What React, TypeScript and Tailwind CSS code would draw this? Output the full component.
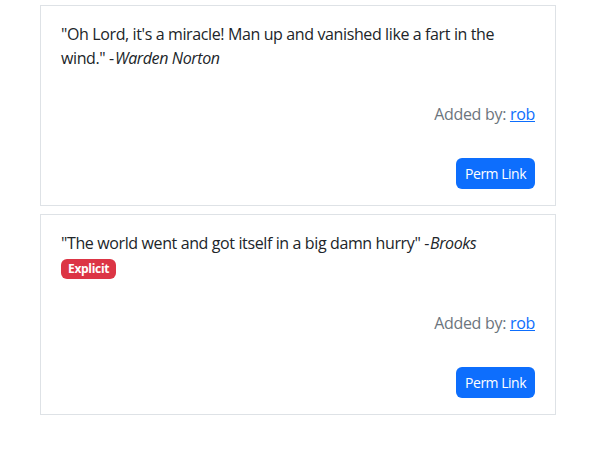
const quotes = [
  {
    text: '"Oh Lord, it\'s a miracle! Man up and vanished like a fart in the wind."',
    author: "Warden Norton",
    explicit: false,
    user: "rob",
  },
  {
    text: '"The world went and got itself in a big damn hurry"',
    author: "Brooks",
    explicit: true,
    user: "rob",
  },
];

const QuoteCard = ({ quote }: { quote: (typeof quotes)[number] }) => {
  return (
    <div className="border border-[#dee2e6] bg-white px-5 pt-4 pb-4 h-[201px] flex flex-col">
      <div className="text-[16px] leading-6 text-[#212529] tracking-[-0.38px]">
        {quote.text} -<em className="pl-px">{quote.author}</em>
      </div>
      {quote.explicit && (
        <div className="h-6 flex items-end">
          <span className="inline-flex items-center h-[20px] bg-[#dc3545] text-white text-[12px] font-bold leading-none px-[7px] rounded-[6px] tracking-[-0.3px]">
            Explicit
          </span>
        </div>
      )}
      <div className="mt-8 text-right text-[16px] leading-6 text-[#6c757d] tracking-[-0.3px]">
        Added by:{" "}
        <a href="#" className="text-[#0d6efd] underline">
          {quote.user}
        </a>
      </div>
      <div className="mt-auto flex justify-end">
        <button className="bg-[#0d6efd] text-white text-[14px] leading-[21px] px-[9px] py-[5px] rounded-[6px] tracking-[-0.5px]">
          Perm Link
        </button>
      </div>
    </div>
  );
};

export default function App() {
  return (
    <div
      className="w-[603px] h-[453px] bg-white pt-[5px] pl-[40px]"
      style={{ fontFamily: '"Open Sans", "Noto Sans", sans-serif' }}
    >
      <div className="w-[516px] flex flex-col gap-[8px]">
        {quotes.map((q, i) => (
          <QuoteCard key={i} quote={q} />
        ))}
      </div>
    </div>
  );
}
